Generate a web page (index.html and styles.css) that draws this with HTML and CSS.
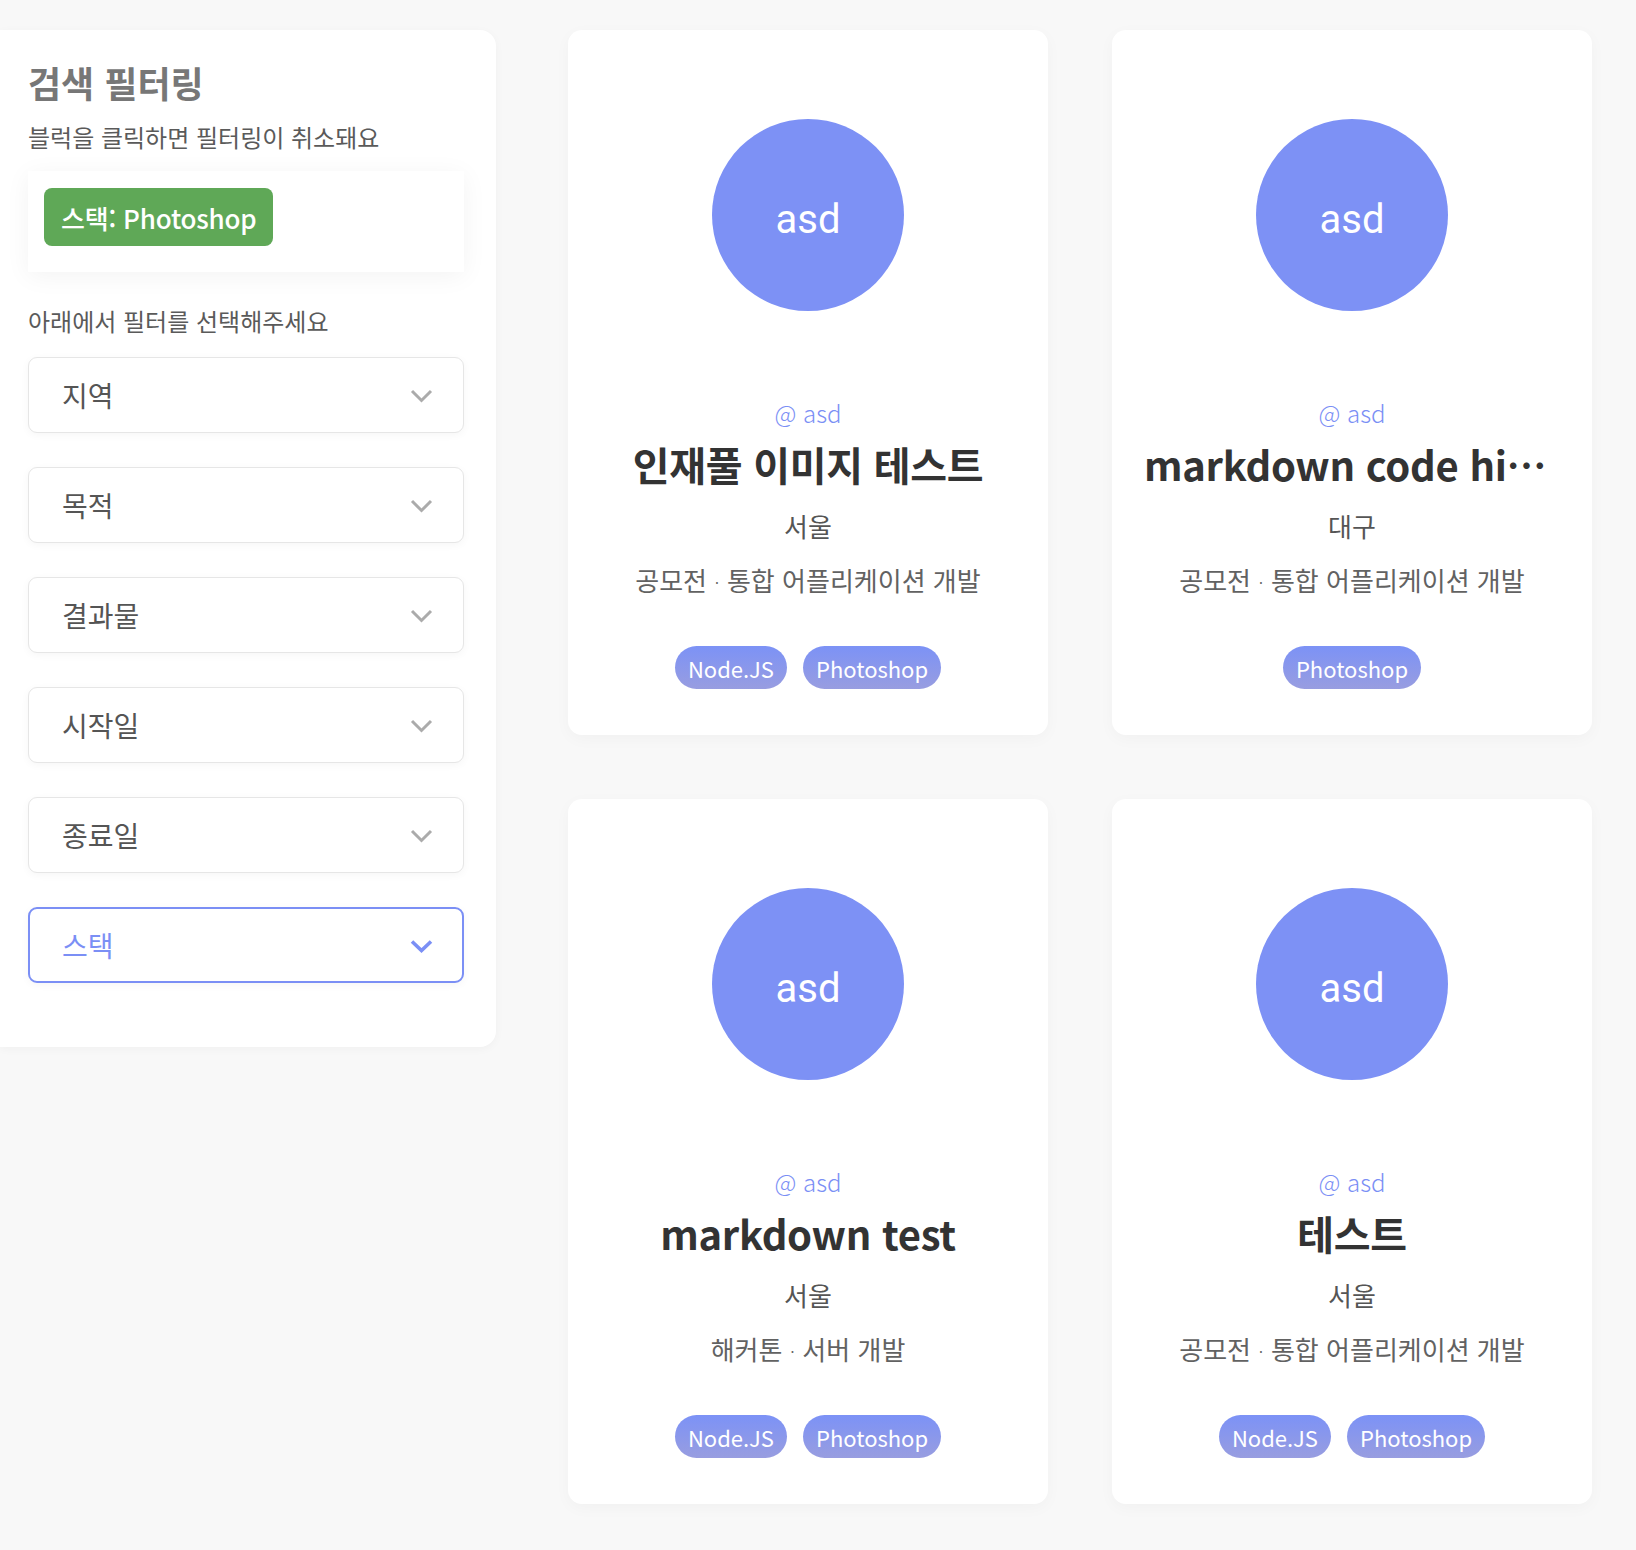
FILE: index.html
```html
<!DOCTYPE html>
<html lang="ko">
<head>
<meta charset="utf-8">
<title>인재풀</title>
<link rel="stylesheet" href="styles.css">
</head>
<body>
<div class="page">
  <aside class="sidebar">
    <h2 class="side-title">검색 필터링</h2>
    <p class="side-desc">블럭을 클릭하면 필터링이 취소돼요</p>
    <div class="chip-box">
      <span class="chip">스택: Photoshop</span>
    </div>
    <p class="side-desc side-desc--select">아래에서 필터를 선택해주세요</p>
    <div class="selects">
      <div class="select"><span class="select-label">지역</span><svg class="chev" width="23" height="14" viewBox="0 0 23 14"><polyline points="2,2 11.5,11.5 21,2" fill="none" stroke="#ababab" stroke-width="3"/></svg></div>
      <div class="select"><span class="select-label">목적</span><svg class="chev" width="23" height="14" viewBox="0 0 23 14"><polyline points="2,2 11.5,11.5 21,2" fill="none" stroke="#ababab" stroke-width="3"/></svg></div>
      <div class="select"><span class="select-label">결과물</span><svg class="chev" width="23" height="14" viewBox="0 0 23 14"><polyline points="2,2 11.5,11.5 21,2" fill="none" stroke="#ababab" stroke-width="3"/></svg></div>
      <div class="select"><span class="select-label">시작일</span><svg class="chev" width="23" height="14" viewBox="0 0 23 14"><polyline points="2,2 11.5,11.5 21,2" fill="none" stroke="#ababab" stroke-width="3"/></svg></div>
      <div class="select"><span class="select-label">종료일</span><svg class="chev" width="23" height="14" viewBox="0 0 23 14"><polyline points="2,2 11.5,11.5 21,2" fill="none" stroke="#ababab" stroke-width="3"/></svg></div>
      <div class="select select--active"><span class="select-label">스택</span><svg class="chev" width="23" height="14" viewBox="0 0 23 14"><polyline points="2,2.5 11.5,11.5 21,2.5" fill="none" stroke="#7b8ff5" stroke-width="3.6"/></svg></div>
    </div>
  </aside>

  <main class="cards">
    <article class="card">
      <div class="avatar">asd</div>
      <div class="author">@ asd</div>
      <h3 class="card-title">인재풀 이미지 테스트</h3>
      <div class="region">서울</div>
      <div class="meta">공모전<span class="dot">·</span>통합 어플리케이션 개발</div>
      <div class="tags"><span class="tag">Node.JS</span><span class="tag">Photoshop</span></div>
    </article>
    <article class="card">
      <div class="avatar">asd</div>
      <div class="author">@ asd</div>
      <h3 class="card-title card-title--clip">markdown code highlight test</h3>
      <div class="region">대구</div>
      <div class="meta">공모전<span class="dot">·</span>통합 어플리케이션 개발</div>
      <div class="tags"><span class="tag">Photoshop</span></div>
    </article>
    <article class="card">
      <div class="avatar">asd</div>
      <div class="author">@ asd</div>
      <h3 class="card-title">markdown test</h3>
      <div class="region">서울</div>
      <div class="meta">해커톤<span class="dot">·</span>서버 개발</div>
      <div class="tags"><span class="tag">Node.JS</span><span class="tag">Photoshop</span></div>
    </article>
    <article class="card">
      <div class="avatar">asd</div>
      <div class="author">@ asd</div>
      <h3 class="card-title">테스트</h3>
      <div class="region">서울</div>
      <div class="meta">공모전<span class="dot">·</span>통합 어플리케이션 개발</div>
      <div class="tags"><span class="tag">Node.JS</span><span class="tag">Photoshop</span></div>
    </article>
  </main>
</div>
</body>
</html>
```

FILE: styles.css
```css
* { box-sizing: border-box; }

html, body {
  margin: 0;
  padding: 0;
  background: #f8f8f8;
}

body {
  font-family: "Noto Sans CJK KR", "Noto Sans", sans-serif;
  color: #333;
}

.page {
  display: flex;
  align-items: flex-start;
  gap: 72px;
  padding-top: 30px;
  padding-bottom: 46px;
}

/* Sidebar */
.sidebar {
  width: 496px;
  flex: none;
  background: #fff;
  border-radius: 0 16px 16px 0;
  box-shadow: 0 2px 10px rgba(0, 0, 0, 0.035);
  padding: 32px 32px 64px 28px;
}

.side-title {
  margin: 0;
  font-size: 36px;
  line-height: 40px;
  font-weight: 700;
  color: #777;
}

.side-desc {
  margin: 20px 0 0;
  font-size: 24px;
  line-height: 30px;
  color: #5a5a5a;
}

.side-desc--select {
  margin-top: 34px;
}

.chip-box {
  margin-top: 19px;
  background: #fff;
  padding: 17px 16px 26px;
  box-shadow: 0 4px 24px rgba(0, 0, 0, 0.05);
  display: flex;
  flex-wrap: wrap;
  gap: 10px;
}

.chip {
  display: inline-flex;
  align-items: center;
  height: 58px;
  padding: 0 17px 0 17px;
  border-radius: 8px;
  background: #5fa857;
  color: #fff;
  font-size: 26px;
  font-weight: 500;
  letter-spacing: -0.2px;
}

.selects {
  margin-top: 21px;
  display: flex;
  flex-direction: column;
  gap: 34px;
}

.select {
  height: 76px;
  border: 1px solid #e6e6e6;
  border-radius: 9px;
  background: #fff;
  box-shadow: 0 2px 8px rgba(0, 0, 0, 0.04);
  display: flex;
  align-items: center;
  justify-content: space-between;
  padding: 0 30px 0 33px;
}

.select-label {
  font-size: 28px;
  color: #555;
  line-height: 1;
}

.chev {
  display: block;
  margin-top: 2px;
}

.select--active {
  border: 2px solid #7b8ff5;
  padding: 0 29px 0 32px;
}

.select--active .select-label {
  color: #7b8ff5;
}

/* Cards */
.cards {
  display: grid;
  grid-template-columns: 480px 480px;
  column-gap: 64px;
  row-gap: 64px;
}

.card {
  background: #fff;
  border-radius: 14px;
  box-shadow: 0 4px 16px rgba(0, 0, 0, 0.03);
  padding: 89px 32px 46px;
  display: flex;
  flex-direction: column;
  align-items: center;
  text-align: center;
  min-width: 0;
}

.avatar {
  width: 192px;
  height: 192px;
  border-radius: 50%;
  background: #7d91f5;
  color: #fff;
  display: flex;
  align-items: center;
  justify-content: center;
  padding-top: 8px;
  font-family: Roboto, "Noto Sans", sans-serif;
  font-size: 40px;
  flex: none;
}

.author {
  margin-top: 85px;
  font-size: 24px;
  line-height: 34px;
  color: #7b8ff5;
  font-weight: 300;
}

.card-title {
  margin: 8px 0 0;
  max-width: 100%;
  font-size: 40px;
  line-height: 52px;
  font-weight: 700;
  color: #333;
  white-space: nowrap;
  letter-spacing: -0.3px;
}

.card-title--clip {
  width: 100%;
  overflow: hidden;
  text-overflow: ellipsis;
}

.region {
  margin-top: 19px;
  font-size: 26px;
  line-height: 34px;
  color: #555;
}

.meta {
  margin-top: 20px;
  font-size: 26px;
  line-height: 34px;
  color: #626262;
}

.dot {
  font-size: 14px;
  margin: 0 8px;
  vertical-align: 3px;
}

.tags {
  margin-top: 47px;
  display: flex;
  gap: 16px;
  justify-content: center;
}

.tag {
  height: 43px;
  padding: 0 13px;
  border-radius: 22px;
  background: linear-gradient(180deg, #7c92f6 0%, #989de0 100%);
  color: #fff;
  font-size: 22px;
  display: inline-flex;
  align-items: center;
}
```
